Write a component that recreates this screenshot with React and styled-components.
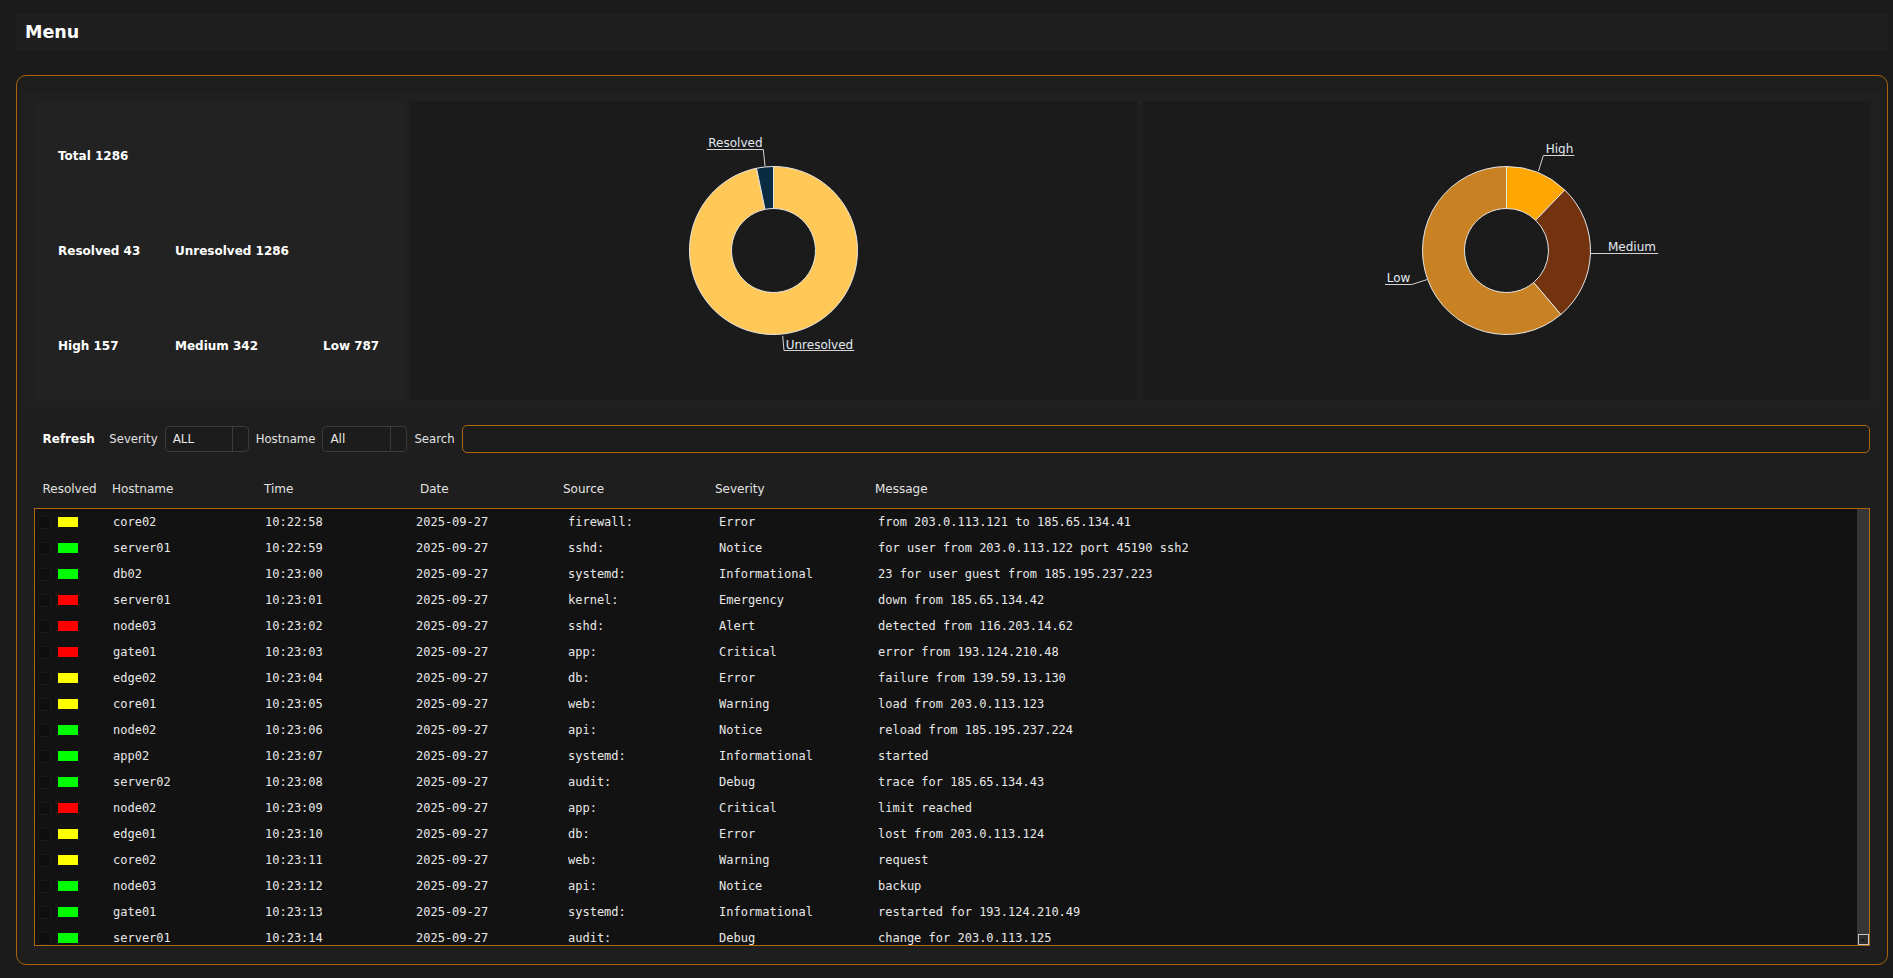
import React from 'react';
import styled, { createGlobalStyle } from 'styled-components';

const GlobalStyle = createGlobalStyle`
  html, body { margin: 0; padding: 0; background: #1b1b1b; }
  body { font-family: "DejaVu Sans", "Noto Sans", sans-serif; color: #e6e6e6; }
  * { box-sizing: border-box; }
`;

const Page = styled.div`
  padding: 14px 5px 13px 16px;
  min-height: 978px;
`;

const TopBar = styled.header`
  height: 36px;
  background: #1f1f1f;
  border-radius: 3px;
  display: flex;
  align-items: center;
  padding-left: 9px;
`;

const Title = styled.h1`
  margin: 0;
  font-size: 17.5px;
  font-weight: 700;
  color: #ffffff;
`;

const Main = styled.main`
  margin-top: 25px;
  border: 1px solid #a8640f;
  border-radius: 10px;
  background: #1e1e1e;
  padding: 16px 8px 18px;
`;

const StatsSection = styled.section`
  display: flex;
  gap: 6px;
  padding: 9px;
  height: 317px;
  background: #202020;
`;

const StatCard = styled.div`
  width: 370px;
  flex: none;
  background: #222222;
  display: grid;
  grid-template-rows: repeat(3, 1fr);
  row-gap: 14px;
  padding: 14px 0 14px 24px;
  align-items: center;
`;

const StatRow = styled.div`
  display: grid;
  grid-template-columns: 117px 148px auto;
  align-items: center;
`;

const StatText = styled.span`
  font-size: 12px;
  font-weight: 700;
  color: #ffffff;
  white-space: nowrap;
`;

const ChartPanel = styled.div`
  flex: 1;
  background: #1b1b1b;
  display: flex;
  min-width: 0;
`;

const ChartSvg = styled.svg`
  width: 100%;
  height: 100%;
  display: block;
`;

const Toolbar = styled.div`
  margin-top: 16px;
  height: 28px;
  padding: 0 9px;
  display: flex;
  align-items: center;
  gap: 7px;
`;

const RefreshButton = styled.button`
  background: transparent;
  border: none;
  color: #ffffff;
  font-family: "DejaVu Sans", sans-serif;
  font-weight: 700;
  font-size: 12px;
  padding: 0 7.5px 0 8.5px;
  height: 26px;
  cursor: pointer;
`;

const Label = styled.span`
  font-size: 11.7px;
  color: #e2e2e2;
  white-space: nowrap;
`;

const SelectBox = styled.div`
  width: ${p => p.$w}px;
  height: 26px;
  flex: none;
  display: flex;
  border: 1px solid #3b3b3b;
  border-radius: 4px;
  background: #1c1c1c;
`;

const SelectValue = styled.span`
  flex: 1;
  display: flex;
  align-items: center;
  padding-left: 7px;
  font-size: 12px;
  color: #e6e6e6;
`;

const SelectArrow = styled.span`
  width: 16px;
  border-left: 1px solid #3b3b3b;
`;

const SearchInput = styled.input`
  flex: 1;
  height: 28px;
  border: 1px solid #b0680f;
  border-radius: 5px;
  background: #1c1c1c;
  color: #e6e6e6;
  font-size: 12px;
  outline: none;
  padding: 0 8px;
`;

const HeadRow = styled.div`
  margin-top: 23px;
  height: 26px;
  padding: 0 9px;
  display: grid;
  grid-template-columns: 78px 152px 156px 143px 152px 160px 1fr;
  align-items: center;
`;

const HeadCell = styled.span`
  font-size: 12px;
  color: #e2e2e2;
  white-space: nowrap;
  padding-left: ${p => (p.$first ? '8.5px' : '0')};
`;

const TableBox = styled.div`
  margin: 6px 9px 0;
  height: 438px;
  border: 1px solid #b0680f;
  background: #121212;
  display: flex;
`;

const RowsArea = styled.div`
  flex: 1;
  min-width: 0;
  overflow: hidden;
`;

const ScrollTrack = styled.div`
  width: 12px;
  flex: none;
  background: #363636;
  display: flex;
  flex-direction: column;
  justify-content: flex-end;
  align-items: center;
`;

const ScrollButton = styled.span`
  width: 11px;
  height: 11px;
  border: 1px solid #c4c4c4;
  background: #2c2c2c;
  display: flex;
  align-items: center;
  justify-content: center;

  &::after {
    content: '';
    width: 0;
    height: 0;
    border-left: 2px solid transparent;
    border-right: 2px solid transparent;
    border-top: 2px solid #0c0c0c;
  }
`;

const Row = styled.div`
  height: 26px;
  display: grid;
  grid-template-columns: 78px 152px 151px 152px 151px 159px 1fr;
  align-items: center;
`;

const FlagCell = styled.span`
  display: flex;
  align-items: center;
  padding-left: 3px;
  gap: 6.7px;
`;

const CheckBox = styled.span`
  width: 13px;
  height: 13px;
  border: 1px solid #1a1a1a;
  border-radius: 2px;
  background: #0f0f0f;
`;

const StatusMark = styled.span`
  width: 20px;
  height: 10px;
  background: ${p => p.$color};
`;

const Cell = styled.span`
  font-family: "DejaVu Sans Mono", "Liberation Mono", monospace;
  font-size: 12px;
  color: #e8e8e8;
  white-space: nowrap;
  overflow: hidden;
`;

const polar = (cx, cy, r, a) => {
  const rad = (a * Math.PI) / 180;
  return [cx + r * Math.sin(rad), cy - r * Math.cos(rad)];
};

function slicePath(cx, cy, r0, r1, a0, a1) {
  const large = a1 - a0 > 180 ? 1 : 0;
  const [x1, y1] = polar(cx, cy, r1, a0);
  const [x2, y2] = polar(cx, cy, r1, a1);
  const [x3, y3] = polar(cx, cy, r0, a1);
  const [x4, y4] = polar(cx, cy, r0, a0);
  return `M${x1} ${y1} A${r1} ${r1} 0 ${large} 1 ${x2} ${y2} L${x3} ${y3} A${r0} ${r0} 0 ${large} 0 ${x4} ${y4} Z`;
}

function Donut({ slices, labels }) {
  const cx = 363.5;
  const cy = 149.5;
  const total = slices.reduce((s, x) => s + x.value, 0);
  let acc = 0;
  return (
    <ChartSvg viewBox="0 0 727 299" preserveAspectRatio="xMidYMid meet">
      {slices.map((s) => {
        const a0 = (acc / total) * 360;
        acc += s.value;
        const a1 = (acc / total) * 360;
        return (
          <path key={s.name} d={slicePath(cx, cy, 42, 84, a0, a1)} fill={s.color} stroke="#e6e6e6" strokeWidth="1" />
        );
      })}
      {labels.map((l) => (
        <g key={l.text}>
          <polyline points={l.points} fill="none" stroke="#d4d4d4" strokeWidth="1" />
          <text x={l.x} y={l.y} textAnchor={l.anchor || 'start'} fill="#e2eaf1" fontSize="12" fontFamily="DejaVu Sans, sans-serif">
            {l.text}
          </text>
        </g>
      ))}
    </ChartSvg>
  );
}

const resolvedSlices = [
  { name: 'Unresolved', value: 1286, color: '#FFC857' },
  { name: 'Resolved', value: 43, color: '#0A2B40' },
];
const resolvedLabels = [
  { text: 'Resolved', points: '355,65 353.3,48.5 296.7,48.5', x: 298.3, y: 46 },
  { text: 'Unresolved', points: '372.7,235 374,249.5 444.3,249.5', x: 375.7, y: 247.5 },
];

const severitySlices = [
  { name: 'High', value: 157, color: '#FFA600' },
  { name: 'Medium', value: 342, color: '#73330E' },
  { name: 'Low', value: 787, color: '#C98223' },
];
const severityLabels = [
  { text: 'High', points: '395.5,70 400.3,54.5 431.3,54.5', x: 402.7, y: 52.3 },
  { text: 'Medium', points: '447.5,152.5 515.3,152.5', x: 513, y: 150, anchor: 'end' },
  { text: 'Low', points: '284.6,178.4 268.7,183.5 242,183.5', x: 243.7, y: 181.3 },
];

const COLORS = { Y: '#ffff00', G: '#00ff00', R: '#ff0000' };

const rows = [
  ['Y', 'core02', '10:22:58', 'firewall:', 'Error', 'from 203.0.113.121 to 185.65.134.41'],
  ['G', 'server01', '10:22:59', 'sshd:', 'Notice', 'for user from 203.0.113.122 port 45190 ssh2'],
  ['G', 'db02', '10:23:00', 'systemd:', 'Informational', '23 for user guest from 185.195.237.223'],
  ['R', 'server01', '10:23:01', 'kernel:', 'Emergency', 'down from 185.65.134.42'],
  ['R', 'node03', '10:23:02', 'sshd:', 'Alert', 'detected from 116.203.14.62'],
  ['R', 'gate01', '10:23:03', 'app:', 'Critical', 'error from 193.124.210.48'],
  ['Y', 'edge02', '10:23:04', 'db:', 'Error', 'failure from 139.59.13.130'],
  ['Y', 'core01', '10:23:05', 'web:', 'Warning', 'load from 203.0.113.123'],
  ['G', 'node02', '10:23:06', 'api:', 'Notice', 'reload from 185.195.237.224'],
  ['G', 'app02', '10:23:07', 'systemd:', 'Informational', 'started'],
  ['G', 'server02', '10:23:08', 'audit:', 'Debug', 'trace for 185.65.134.43'],
  ['R', 'node02', '10:23:09', 'app:', 'Critical', 'limit reached'],
  ['Y', 'edge01', '10:23:10', 'db:', 'Error', 'lost from 203.0.113.124'],
  ['Y', 'core02', '10:23:11', 'web:', 'Warning', 'request'],
  ['G', 'node03', '10:23:12', 'api:', 'Notice', 'backup'],
  ['G', 'gate01', '10:23:13', 'systemd:', 'Informational', 'restarted for 193.124.210.49'],
  ['G', 'server01', '10:23:14', 'audit:', 'Debug', 'change for 203.0.113.125'],
];

export default function App() {
  return (
    <>
      <GlobalStyle />
      <Page>
        <TopBar>
          <Title>Menu</Title>
        </TopBar>
        <Main>
          <StatsSection>
            <StatCard>
              <StatRow>
                <StatText>Total 1286</StatText>
              </StatRow>
              <StatRow>
                <StatText>Resolved 43</StatText>
                <StatText>Unresolved 1286</StatText>
              </StatRow>
              <StatRow>
                <StatText>High 157</StatText>
                <StatText>Medium 342</StatText>
                <StatText>Low 787</StatText>
              </StatRow>
            </StatCard>
            <ChartPanel>
              <Donut slices={resolvedSlices} labels={resolvedLabels} />
            </ChartPanel>
            <ChartPanel>
              <Donut slices={severitySlices} labels={severityLabels} />
            </ChartPanel>
          </StatsSection>

          <Toolbar>
            <RefreshButton>Refresh</RefreshButton>
            <Label>Severity</Label>
            <SelectBox $w={84}>
              <SelectValue>ALL</SelectValue>
              <SelectArrow />
            </SelectBox>
            <Label>Hostname</Label>
            <SelectBox $w={85}>
              <SelectValue>All</SelectValue>
              <SelectArrow />
            </SelectBox>
            <Label>Search</Label>
            <SearchInput type="text" />
          </Toolbar>

          <HeadRow>
            <HeadCell $first>Resolved</HeadCell>
            <HeadCell>Hostname</HeadCell>
            <HeadCell>Time</HeadCell>
            <HeadCell>Date</HeadCell>
            <HeadCell>Source</HeadCell>
            <HeadCell>Severity</HeadCell>
            <HeadCell>Message</HeadCell>
          </HeadRow>

          <TableBox>
            <RowsArea>
              {rows.map((r, i) => (
                <Row key={i}>
                  <FlagCell>
                    <CheckBox />
                    <StatusMark $color={COLORS[r[0]]} />
                  </FlagCell>
                  <Cell>{r[1]}</Cell>
                  <Cell>{r[2]}</Cell>
                  <Cell>2025-09-27</Cell>
                  <Cell>{r[3]}</Cell>
                  <Cell>{r[4]}</Cell>
                  <Cell>{r[5]}</Cell>
                </Row>
              ))}
            </RowsArea>
            <ScrollTrack>
              <ScrollButton />
            </ScrollTrack>
          </TableBox>
        </Main>
      </Page>
    </>
  );
}
